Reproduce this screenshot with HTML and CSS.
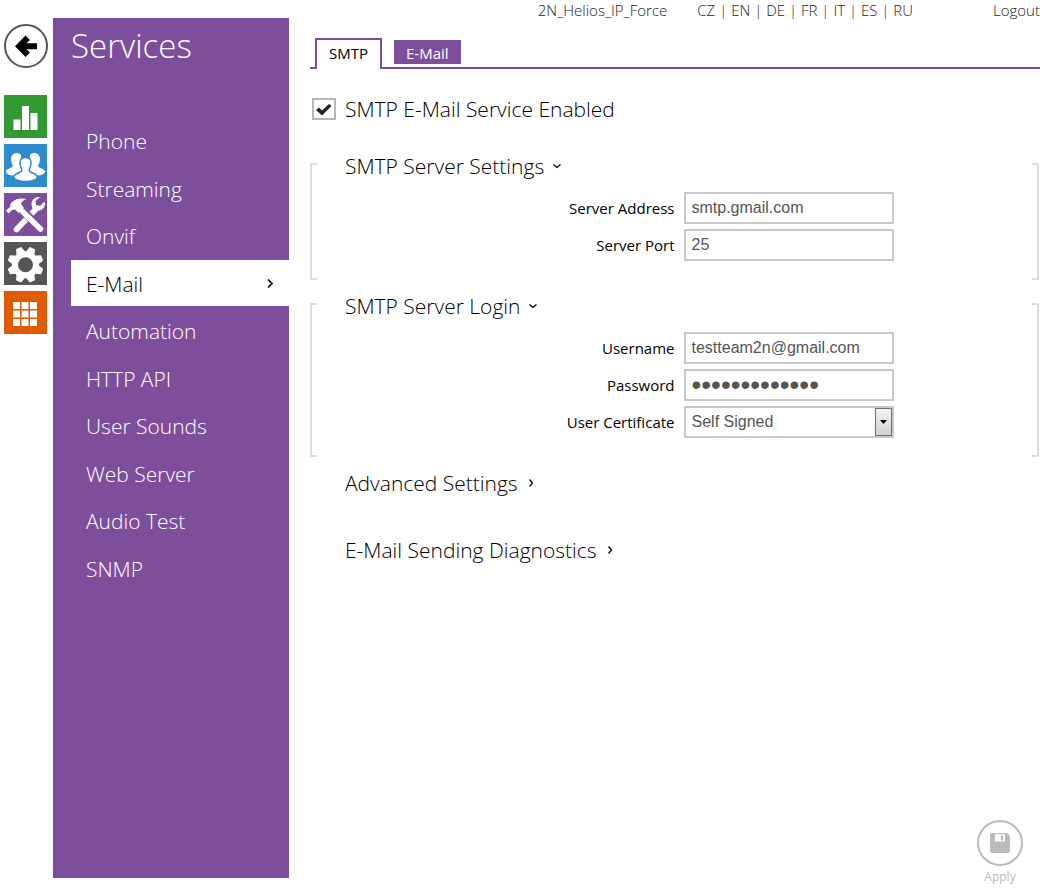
FILE: index.html
```
<!DOCTYPE html>
<html lang="en">
<head>
  <meta charset="UTF-8">
  <title>2N Helios IP Force - E-Mail</title>
  <link rel="stylesheet" href="styles.css">
</head>
<body>

<nav class="rail" aria-label="Sections">
  <a class="back" href="#" aria-label="Back">
    <svg width="44" height="44" viewBox="0 0 44 44">
      <circle cx="22" cy="22" r="21" fill="#fff" stroke="#555" stroke-width="2"/>
      <path d="M11 22.200L21.500 11.500l4.500 4.500-3.500 3.200H33v6H22.500L26 28.500 21.500 33z" fill="#000"/>
    </svg>
  </a>
  <a class="tile green" href="#" aria-label="Status">
    <svg width="43" height="43" viewBox="0 0 43 43" fill="#fff">
      <path d="M9.500 24.500h7V35h-7zM18 11h7v24h-7zM26.500 18h7v17h-7z"/>
    </svg>
  </a>
  <a class="tile blue" href="#" aria-label="Directory">
    <svg width="43" height="43" viewBox="0 0 43 43" fill="#fff">
      <path d="M13 9c-4 0-6 2.500-6 6.500 0 3 1.700 4.500 1.700 6.500 0 2.500-6.700 2.500-6.700 5.500 0 2.500 4 4 8 4h7V11c-1-1.300-2.500-2-4-2z"/>
      <path d="M30 9c4 0 6 2.500 6 6.500 0 3-1.700 4.500-1.700 6.500 0 2.500 6.700 2.500 6.700 5.500 0 2.500-4 4-8 4h-7V11c1-1.300 2.500-2 4-2z"/>
      <path d="M17 9l4.500 6L26 9v6h-9z" fill="#2e8bcd"/>
      <path d="M21.500 13.500c4 0 6 2.700 5.500 6.500-.3 3-1.800 4.500-1.800 6.500 0 2.500 8 2.700 8 6.400 0 2.800-5.700 4.600-11.700 4.600S9.800 35.700 9.800 32.900c0-3.700 8-3.900 8-6.400 0-2-1.500-3.500-1.800-6.500-.5-3.800 1.500-6.500 5.500-6.500z" stroke="#2e8bcd" stroke-width="1.500"/>
    </svg>
  </a>
  <a class="tile purple" href="#" aria-label="Services">
    <svg width="43" height="43" viewBox="0 0 43 43">
      <path d="M12.500 36.500L31 17" stroke="#fff" stroke-width="5.500" stroke-linecap="round"/>
      <path d="M40.500 8.500L36 13l-4-1-.5-4L36 4c-4-.5-8.500 2-8.500 7 0 5.500 4.500 7.500 8 6.500 4-1 6.500-5 5-9z" fill="#fff"/>
      <path d="M15 14l22.500 22" stroke="#7d4e9c" stroke-width="8"/>
      <path d="M19 19l17.500 17" stroke="#fff" stroke-width="5.500" stroke-linecap="round"/>
      <path d="M2 17.500l4-3.500c0-3 1-4.500 3.500-6C13 5 18 5 23 6c-3.500 1-5.500 2.500-6 5l3 4-5 5-4-3.500-3 .5-3.500 3.500z" fill="#fff"/>
    </svg>
  </a>
  <a class="tile grey" href="#" aria-label="System">
    <svg width="43" height="43" viewBox="0 0 43 43" fill="#fff">
      <circle cx="21.500" cy="22.700" r="13.500"/>
      <g transform="translate(21.500 22.700)">
        <path transform="rotate(22.500)" d="M-5-11l2.200-7h5.600L5-11v22l-2.200 7h-5.600L-5 11z"/>
        <path transform="rotate(67.500)" d="M-5-11l2.200-7h5.600L5-11v22l-2.200 7h-5.600L-5 11z"/>
        <path transform="rotate(112.500)" d="M-5-11l2.200-7h5.600L5-11v22l-2.200 7h-5.600L-5 11z"/>
        <path transform="rotate(157.500)" d="M-5-11l2.200-7h5.600L5-11v22l-2.200 7h-5.600L-5 11z"/>
      </g>
      <circle cx="21.500" cy="22.700" r="7.500" fill="#555"/>
    </svg>
  </a>
  <a class="tile orange" href="#" aria-label="Menu">
    <svg width="43" height="43" viewBox="0 0 43 43" fill="#fff">
      <path d="M9 11h7v7H9zM17.500 11h7v7h-7zM26 11h7v7h-7zM9 19.500h7v7H9zM17.500 19.500h7v7h-7zM26 19.500h7v7h-7zM9 28h7v7H9zM17.500 28h7v7h-7zM26 28h7v7h-7z"/>
    </svg>
  </a>
</nav>

<aside class="sidebar">
  <h1>Services</h1>
  <nav class="menu" aria-label="Services">
    <a href="#">Phone</a>
    <a href="#">Streaming</a>
    <a href="#">Onvif</a>
    <a class="active" href="#">E-Mail
      <svg width="8" height="12" viewBox="0 0 8 12"><path d="M2 1.500L6 5.500l-4 4" fill="none" stroke="#000" stroke-width="1.700"/></svg>
    </a>
    <a href="#">Automation</a>
    <a href="#">HTTP API</a>
    <a href="#">User Sounds</a>
    <a href="#">Web Server</a>
    <a href="#">Audio Test</a>
    <a href="#">SNMP</a>
  </nav>
</aside>

<main>
  <header class="topbar">
    <span>2N_Helios_IP_Force</span>
    <nav class="langs" aria-label="Language">
      <a href="#">CZ</a> | <a href="#">EN</a> | <a href="#">DE</a> | <a href="#">FR</a> | <a href="#">IT</a> | <a href="#">ES</a> | <a href="#">RU</a>
    </nav>
    <a href="#">Logout</a>
  </header>

  <nav class="tabs" aria-label="E-Mail tabs">
    <a class="tab current" href="#">SMTP</a>
    <a class="tab" href="#">E-Mail</a>
  </nav>

  <form class="settings">
    <label class="enable" for="enabled">
      <span class="checkbox">
        <input type="checkbox" id="enabled" checked>
        <svg width="24" height="22" viewBox="0 0 24 22"><path d="M4 12l3-2.500 3 3L17 6l2.500 2L10 17.500z" fill="#222"/></svg>
      </span>
      SMTP E-Mail Service Enabled
    </label>

    <section class="group">
      <div class="group-body">
        <h2><button type="button">SMTP Server Settings
          <svg width="10" height="10" viewBox="0 0 10 10"><path d="M1.500 3.500L5 6.500l3.500-3" fill="none" stroke="#000" stroke-width="1.300"/></svg>
        </button></h2>
        <div class="row">
          <label for="address">Server Address</label>
          <input type="text" id="address" value="smtp.gmail.com">
        </div>
        <div class="row">
          <label for="port">Server Port</label>
          <input type="text" id="port" value="25">
        </div>
      </div>
    </section>

    <section class="group">
      <div class="group-body">
        <h2><button type="button">SMTP Server Login
          <svg width="10" height="10" viewBox="0 0 10 10"><path d="M1.500 3.500L5 6.500l3.500-3" fill="none" stroke="#000" stroke-width="1.300"/></svg>
        </button></h2>
        <div class="row">
          <label for="username">Username</label>
          <input type="text" id="username" value="testteam2n@gmail.com">
        </div>
        <div class="row">
          <label for="password">Password</label>
          <input type="password" id="password" value="1234567890123">
        </div>
        <div class="row">
          <label for="certificate">User Certificate</label>
          <span class="select">
            <select id="certificate">
              <option>Self Signed</option>
            </select>
            <svg width="17" height="28" viewBox="0 0 17 28">
              <defs>
                <linearGradient id="face" x1="0" y1="0" x2="0" y2="1">
                  <stop offset="0" stop-color="#f4f4f4"/>
                  <stop offset="1" stop-color="#cfcfcf"/>
                </linearGradient>
              </defs>
              <rect x="0.500" y="0.500" width="16" height="27" fill="url(#face)" stroke="#707070"/>
              <path d="M5 12h7l-3.500 4z" fill="#000"/>
            </svg>
          </span>
        </div>
      </div>
    </section>

    <h2 class="closed"><button type="button">Advanced Settings
      <svg width="10" height="10" viewBox="0 0 10 10"><path d="M3.500 1.500l3 3.500-3 3.500" fill="none" stroke="#000" stroke-width="1.300"/></svg>
    </button></h2>
    <h2 class="closed"><button type="button">E-Mail Sending Diagnostics
      <svg width="10" height="10" viewBox="0 0 10 10"><path d="M3.500 1.500l3 3.500-3 3.500" fill="none" stroke="#000" stroke-width="1.300"/></svg>
    </button></h2>

    <button class="apply" type="submit" disabled>
      <svg width="46" height="46" viewBox="0 0 46 46">
        <circle cx="23" cy="23" r="22" fill="#fff" stroke="#bbb" stroke-width="2"/>
        <path d="M15 13h15l3 3v15a2 2 0 0 1-2 2H15a2 2 0 0 1-2-2V15a2 2 0 0 1 2-2z" fill="#bbb"/>
        <path d="M18 14h10v7.500H18z" fill="#fff"/>
        <path d="M24 15.500h2v5h-2z" fill="#bbb"/>
      </svg>
      Apply
    </button>
  </form>
</main>

</body>
</html>
```

FILE: styles.css
```
*, *::before, *::after {
  box-sizing: border-box;
}

body {
  display: flex;
  min-height: 100vh;
  margin: 0;
  background-color: #fff;
  color: #000;
  font-family: 'Segoe UI', 'Open Sans', sans-serif;
  font-size: 15px;
}

a {
  color: inherit;
  text-decoration: none;
}

svg {
  display: block;
}

/* icon rail */
.rail {
  display: flex;
  flex-direction: column;
  gap: 6px;
  padding: 24px 5px 0 4px;
}

.back {
  margin-bottom: 21px;
}

.tile {
  width: 43px;
  height: 43px;
}

.green { background-color: #339933; }
.blue { background-color: #2e8bcd; }
.purple { background-color: #7d4e9c; }
.grey { background-color: #555; }
.orange { background-color: #e05a00; }

/* sidebar */
.sidebar {
  width: 236px;
  flex-shrink: 0;
  margin: 18px 0 15px;
  padding-left: 18px;
  background-color: #7d4e9c;
  color: #fff;
}

.sidebar h1 {
  margin: 0 0 43px;
  font-size: 33px;
  font-weight: 300;
  line-height: 56px;
}

.menu {
  display: flex;
  flex-direction: column;
  justify-content: space-between;
  min-height: 474px;
  font-size: 21px;
  font-weight: 300;
}

.menu a {
  display: flex;
  align-items: center;
  justify-content: space-between;
  height: 46px;
  padding: 2px 15px 0;
}

.menu .active {
  background-color: #fff;
  color: #000;
}

/* content */
main {
  display: flex;
  flex: 1;
  flex-direction: column;
  padding: 0 10px 8px 21px;
}

.topbar {
  display: flex;
  justify-content: flex-end;
  color: #222;
  font-weight: 300;
  line-height: 20px;
}

.langs {
  margin: 0 80px 0 30px;
}

.tabs {
  display: flex;
  align-items: flex-start;
  gap: 12px;
  margin-top: 18px;
  padding-left: 5px;
  border-bottom: 2px solid #7d4e9c;
}

.tab {
  margin-top: 2px;
  padding: 2px 12px 0;
  background-color: #7d4e9c;
  color: #fff;
  line-height: 22px;
}

.tab.current {
  margin: 0 0 -2px;
  padding: 0 12px 2px;
  border: 2px solid #7d4e9c;
  border-bottom: none;
  background-color: #fff;
  color: #000;
  line-height: 27px;
}

.settings {
  display: flex;
  flex: 1;
  flex-direction: column;
  margin: 28px 1px 0 0;
}

.enable {
  display: flex;
  align-items: center;
  gap: 9px;
  margin: 0 0 33px 2px;
  font-size: 21px;
  font-weight: 300;
  line-height: 24px;
}

.checkbox, .select {
  display: grid;
}

.checkbox > *, .select > * {
  grid-area: 1 / 1;
}

.checkbox svg, .select svg {
  pointer-events: none;
}

.checkbox input {
  appearance: none;
  width: 24px;
  height: 22px;
  margin: 0;
  border: 2px solid #b8b8b8;
}

.checkbox input:not(:checked) + svg {
  visibility: hidden;
}

/* open groups sit between square brackets */
.group {
  display: flex;
  margin-bottom: 14px;
}

.group::before, .group::after {
  content: "";
  width: 7px;
  margin-top: 9px;
  border: 2px solid #ddd;
}

.group::before { border-right: none; }
.group::after { border-left: none; }

.group-body {
  flex: 1;
  padding-bottom: 19px;
}

h2 {
  margin: 0 0 14px 28px;
  font-size: 21px;
  font-weight: 300;
  line-height: 24px;
}

h2 button {
  display: flex;
  align-items: center;
  gap: 8px;
  padding: 0;
  border: none;
  background: none;
  color: inherit;
  font: inherit;
  cursor: pointer;
}

.closed {
  margin: 0 0 43px 35px;
}

.row {
  display: grid;
  grid-template-columns: 1fr 1fr;
  align-items: center;
}

.row + .row {
  margin-top: 5px;
}

.row label {
  text-align: right;
}

.row input, .row select {
  width: 210px;
  height: 32px;
  padding: 0 6px;
  border: 2px solid #c8c8c8;
  border-radius: 0;
  background-color: #fff;
  color: #555;
  font-family: 'Liberation Sans', Arial, sans-serif;
  font-size: 16px;
}

.row input, .select {
  margin-left: 9px;
}

.row input[type="password"] {
  font-size: 28px;
}

.select {
  width: 210px;
}

.select select {
  appearance: none;
  padding-bottom: 2px;
}

.select svg {
  align-self: center;
  justify-self: end;
  margin-right: 2px;
}

.apply {
  display: flex;
  flex-direction: column;
  align-items: center;
  align-self: flex-end;
  gap: 2px;
  margin: auto 16px 0 0;
  padding: 0;
  border: none;
  background: none;
  color: #bbb;
  font-family: inherit;
  font-size: 12px;
  line-height: 17px;
}
```
